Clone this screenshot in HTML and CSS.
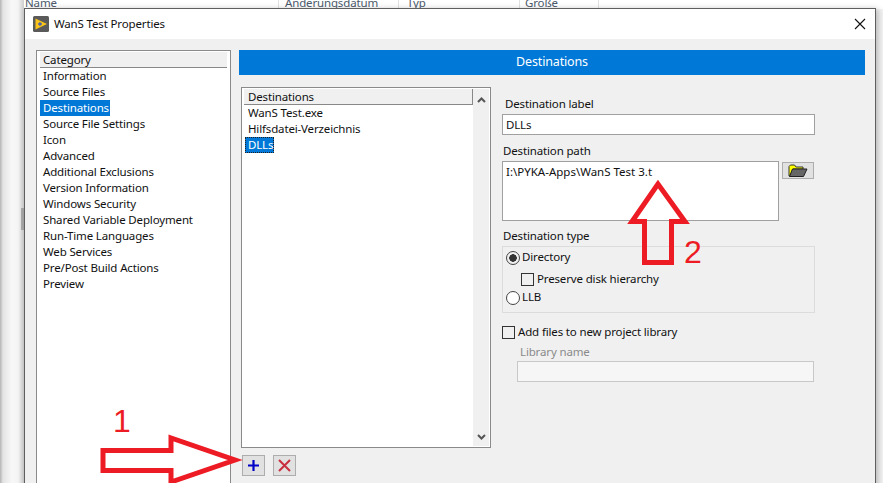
FILE: index.html
```html
<!DOCTYPE html>
<html lang="en">
<head>
<meta charset="utf-8">
<title>WanS Test Properties</title>
<link rel="stylesheet" href="styles.css">
</head>
<body>
<div class="explorer-head">
  <span class="col col-name">Name</span>
  <span class="col col-date">Änderungsdatum</span>
  <span class="col col-type">Typ</span>
  <span class="col col-size">Größe</span>
</div>
<div class="edge-thumb"></div>

<div class="dialog">
  <div class="titlebar">
    <svg class="app-icon" width="16" height="16" viewBox="0 0 16 16"><rect width="16" height="16" rx="1.5" fill="#5a5a5a"/><path d="M2.5 2.5 14 8 2.5 13.5z" fill="#fcc419"/><path d="M5 8h4M7 6v4" stroke="#4a63a8" stroke-width="1.3"/></svg>
    <span class="title">WanS Test Properties</span>
    <svg class="close" width="12" height="12" viewBox="0 0 12 12"><path d="M1 1l10 10M11 1 1 11" stroke="#111" stroke-width="1.1" fill="none"/></svg>
  </div>
  <div class="body">
    <div class="category">
      <div class="list-head cat-head">Category</div>
      <div class="row">Information</div>
      <div class="row">Source Files</div>
      <div class="row"><span class="sel">Destinations</span></div>
      <div class="row">Source File Settings</div>
      <div class="row">Icon</div>
      <div class="row">Advanced</div>
      <div class="row">Additional Exclusions</div>
      <div class="row">Version Information</div>
      <div class="row">Windows Security</div>
      <div class="row">Shared Variable Deployment</div>
      <div class="row">Run-Time Languages</div>
      <div class="row">Web Services</div>
      <div class="row">Pre/Post Build Actions</div>
      <div class="row">Preview</div>
    </div>
    <div class="main">
      <div class="banner">Destinations</div>
      <div class="panel">
        <div class="dest-col">
          <div class="dest-list">
            <div class="dest-items">
              <div class="list-head dest-head">Destinations</div>
              <div class="row dest-row">WanS Test.exe</div>
              <div class="row dest-row">Hilfsdatei-Verzeichnis</div>
              <div class="row dest-row"><span class="sel sel-focus">DLLs</span></div>
            </div>
            <div class="scrollbar">
              <svg width="9" height="6" viewBox="0 0 9 6"><path d="M1 5l3.500-3.500L8 5" stroke="#555" stroke-width="2" fill="none"/></svg>
              <svg width="9" height="6" viewBox="0 0 9 6"><path d="M1 1l3.500 3.500L8 1" stroke="#555" stroke-width="2" fill="none"/></svg>
            </div>
          </div>
          <div class="dest-buttons">
            <div class="btn"><svg width="11" height="11" viewBox="0 0 11 11"><path d="M5.500 0v11M0 5.500h11" stroke="#0000c8" stroke-width="2.200"/></svg></div>
            <div class="btn"><svg width="15" height="15" viewBox="0 0 15 15"><path d="M2 2l11 11M13 2 2 13" stroke="#c9303f" stroke-width="2"/></svg></div>
          </div>
        </div>
        <div class="form">
          <div class="label">Destination label</div>
          <div class="input input-label">DLLs</div>
          <div class="label label-path">Destination path</div>
          <div class="path-row">
            <div class="input input-path">I:\PYKA-Apps\WanS Test 3.t</div>
            <div class="btn btn-folder"><svg width="20" height="13" viewBox="0 0 20 13"><path d="M1 12V2.500L2.500 1h4L8 3h7v2H5L2 12z" fill="#ffff00" stroke="#333"/><path d="M1.500 12.500 4.500 5H19l-3.500 7.500z" fill="#666" stroke="#222"/></svg></div>
          </div>
          <div class="label label-type">Destination type</div>
          <div class="group">
            <div class="opt opt-dir"><span class="radio radio-on"></span><span>Directory</span></div>
            <div class="opt opt-keep"><span class="check"></span><span>Preserve disk hierarchy</span></div>
            <div class="opt opt-llb"><span class="radio"></span><span>LLB</span></div>
          </div>
          <div class="opt opt-add"><span class="check"></span><span>Add files to new project library</span></div>
          <div class="label label-lib">Library name</div>
          <div class="input input-lib"></div>
        </div>
      </div>
    </div>
  </div>
</div>

<svg class="arrows" width="883" height="483" viewBox="0 0 883 483">
  <path d="M103 450.500H171V438L235 460 171 482V470.500H103z" fill="none" stroke="#ed1c24" stroke-width="5"/>
  <path d="M658 184 632 221.500H644.500V262.500H671.500V221.500H685z" fill="none" stroke="#ed1c24" stroke-width="5"/>
</svg>
<span class="num num-1">1</span>
<span class="num num-2">2</span>
</body>
</html>
```
FILE: styles.css
```css
* { box-sizing: border-box; }
html, body { margin: 0; height: 483px; overflow: hidden; }
body {
  position: relative;
  width: 883px;
  font: 11.5px/16px "Noto Sans", sans-serif;
  letter-spacing: -0.15px;
  color: #111;
  background: linear-gradient(90deg, #b4b4b4 0, #e4e4e4 3px, #f8f8f8 12px, #f4f4f4 18px, #d2d2d2 23px, #d2d2d2 24px, #f2f2f2 24px);
}
.explorer-head {
  position: absolute;
  left: 24px; top: 0;
  width: 859px; height: 9px;
  background: #fff;
  overflow: hidden;
}
.col {
  position: absolute;
  top: -5px;
  height: 16px;
  color: #4c5a6c;
  padding-left: 7px;
  border-right: 1px solid #e2e2e2;
}
.col-name { left: 0; width: 255px; padding-left: 1px; }
.col-date { left: 254px; width: 121px; }
.col-type { left: 375px; width: 121px; padding-left: 8px; }
.col-size { left: 494px; width: 81px; }
.edge-thumb {
  position: absolute;
  left: 21px; top: 208px;
  width: 3px; height: 22px;
  background: #a8a8a8;
}
.dialog {
  position: absolute;
  left: 24px; top: 8px;
  width: 852px; height: 500px;
  border: 1px solid #5f5f5f;
  background: #f0f0f0;
  box-shadow: 2px 1px 6px rgba(0,0,0,.25);
}
.titlebar {
  display: flex;
  align-items: center;
  height: 30px;
  padding: 0 9px 0 8px;
  background: #fff;
}
.app-icon { flex: none; }
.title { margin-left: 5px; flex: 1; }
.close { flex: none; }
.body {
  display: flex;
  gap: 8px;
  padding: 11px 0 0 11px;
}
.category {
  width: 195px;
  height: 440px;
  padding: 1px 3px;
  border: 1px solid #8a8a8a;
  background: #fff;
}
.list-head {
  height: 16px;
  line-height: 15px;
  padding-left: 3px;
  background: #f0f0f0;
  border-bottom: 1px solid #888;
}
.cat-head { width: 100%; height: 16px; }
.row { height: 16px; padding-left: 3px; white-space: nowrap; }
.sel {
  display: inline-block;
  height: 16px;
  margin-left: -3px;
  padding: 0 1px 0 3px;
  background: #0078d7;
  color: #fff;
}
.main { width: 626px; }
.banner {
  height: 25px;
  line-height: 24px;
  font-size: 12.5px;
  text-align: center;
  color: #fff;
  background: #0078d7;
}
.panel {
  display: flex;
  gap: 11px;
  padding: 12px 0 0 2px;
}
.dest-col { width: 250px; }
.dest-list {
  display: flex;
  height: 361px;
  padding: 1px 1px 1px 2px;
  border: 1px solid #8a8a8a;
  background: #fff;
}
.dest-items { flex: 1; }
.dest-head {
  height: 16px;
  padding-left: 4px;
  border-right: 1px solid #888;
}
.dest-row { padding-left: 4px; }
.dest-row .sel { margin-left: -3px; padding: 0 1px 0 3px; outline: 1px dotted #222; outline-offset: -1px; }
.scrollbar {
  display: flex;
  flex-direction: column;
  justify-content: space-between;
  align-items: center;
  width: 16px;
  padding: 8px 0 6px;
  background: #f0f0f0;
}
.dest-buttons { display: flex; gap: 8px; margin: 7px 0 0 1px; }
.btn {
  display: flex;
  align-items: center;
  justify-content: center;
  width: 23px; height: 21px;
  background: #e1e1e1;
  border: 1px solid #adadad;
}
.form { width: 313px; padding-top: 9px; }
.label { height: 16px; padding-left: 3px; margin-bottom: 2px; }
.input {
  background: #fff;
  border: 1px solid #a0a0a0;
  padding-left: 3px;
  line-height: 19px;
  white-space: nowrap;
}
.input-label { height: 21px; }
.label-path { margin-top: 8px; padding-left: 1px; }
.path-row { display: flex; align-items: flex-start; gap: 3px; }
.input-path { width: 277px; height: 60px; line-height: 18px; padding-top: 1px; letter-spacing: 0; }
.btn-folder { width: 32px; height: 17px; margin-top: 1px; }
.label-type { margin: 7px 0 2px; padding-left: 1px; }
.group {
  height: 67px;
  border: 1px solid #dcdcdc;
  padding: 2px 0 0 3px;
}
.opt { display: flex; align-items: center; height: 16px; white-space: nowrap; }
.radio {
  flex: none;
  width: 14px; height: 14px;
  margin: 2px 2px 0 0;
  border: 1px solid #444;
  border-radius: 50%;
  background: #fff;
}
.radio-on {
  background: radial-gradient(circle, #333 0, #333 3.500px, #f0f0f0 4px);
}
.check {
  flex: none;
  width: 13px; height: 13px;
  border: 1px solid #333;
  background: #f0f0f0;
}
.opt-keep { margin: 6px 0 0 15px; gap: 3px; }
.opt-llb { margin-top: 2px; }
.opt-add { margin-top: 11px; gap: 3px; }
.label-lib { margin: 4px 0 1px; padding-left: 18px; color: #8a8a8a; }
.input-lib {
  width: 297px; height: 21px;
  margin-left: 15px;
  background: #f6f6f6;
  border-color: #c8c8c8;
}
.arrows { position: absolute; left: 0; top: 0; pointer-events: none; }
.num {
  position: absolute;
  font: 32px/32px "Liberation Sans", sans-serif;
  letter-spacing: 0;
  color: #ed1c24;
}
.num-1 { left: 113px; top: 405px; }
.num-2 { left: 684px; top: 236px; }
```
